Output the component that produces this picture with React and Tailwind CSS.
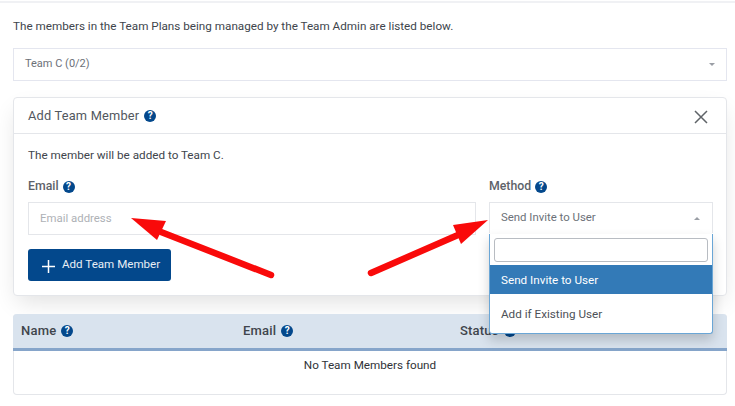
const font = { fontFamily: 'Roboto, sans-serif' };

function Help({ className = "" }) {
  return (
    <span className={`inline-flex w-[12px] h-[12px] rounded-full bg-[#03488c] text-white items-center justify-center text-[10px] font-bold leading-none ${className}`}>?</span>
  );
}

export default function App() {
  return (
    <div className="relative w-[735px] h-[406px] overflow-hidden bg-white text-[11.7px] text-[#3f444b]" style={font}>
      <div className="h-[3px] border-b-2 border-[#f0f1f4]" />
      <div className="pl-[13px] pr-[8px]">
        <p className="mt-[15px] h-[17px] leading-[17px] text-[#40454c]">The members in the Team Plans being managed by the Team Admin are listed below.</p>
        <div className="mt-[13px] h-[33px] border border-[#e4e6ef] flex items-center justify-between pl-[11px] pr-[11px] text-[#6c7178] text-[11px]">
          <span>Team C (0/2)</span>
          <span className="w-0 h-0 border-x-[3px] border-x-transparent border-t-[3px] border-t-[#9a9ea5]" />
        </div>
        <div className="mt-[16px] h-[199px] border border-[#e4e6ea] rounded-[4px] shadow-[0_10px_22px_-4px_rgba(0,0,0,0.12)] bg-white">
          <div className="h-[36px] border-b border-[#e4e6ea] flex items-center justify-between pl-[14px] pr-[18px]">
            <div className="flex items-center gap-[5px] text-[12.8px] text-[#52575e] tracking-[0.2px]">
              Add Team Member <Help />
            </div>
            <svg width="14" height="14" viewBox="0 0 14 14" className="mt-[2px]"><path d="M1 1 L13 13 M13 1 L1 13" stroke="#5f6368" strokeWidth="1.5" /></svg>
          </div>
          <div className="pl-[14px] pr-[13px]">
            <p className="mt-[13px] h-[17px] leading-[17px] text-[#40454c]">The member will be added to Team C.</p>
            <div className="mt-[14px] flex gap-[13px]">
              <div className="w-[448px] shrink-0">
                <div className="h-[17px] flex items-center gap-[4px] font-medium text-[12.3px] text-[#5d6269]">Email <Help /></div>
                <div className="mt-[7px] h-[33px] border border-[#e4e6ea] flex items-center pl-[11px] text-[#aeb1b6] text-[11.4px]">Email address</div>
              </div>
              <div className="w-[224px] shrink-0">
                <div className="h-[17px] flex items-center gap-[4px] font-medium text-[12.3px] text-[#5d6269]">Method <Help /></div>
                <div className="mt-[7px] h-[31px] border-x border-t border-[#e4e6ea] flex items-center justify-between pl-[11px] pr-[12px] text-[#6c7178] text-[11.4px]">
                  <span>Send Invite to User</span>
                  <span className="w-0 h-0 border-x-[3px] border-x-transparent border-b-[3px] border-b-[#9a9ea5]" />
                </div>
              </div>
            </div>
            <button className="mt-[14px] w-[143px] h-[32px] rounded-[3px] bg-[#03488c] text-white flex items-center pl-[14px] gap-[7px]">
              <svg width="13" height="13" viewBox="0 0 13 13" className="mt-[2px]"><path d="M6.5 0 V13 M0 6.5 H13" stroke="#fff" strokeWidth="1.5" /></svg>
              <span className="text-[#e8eef5] text-[11.6px]">Add Team Member</span>
            </button>
          </div>
        </div>
        <div className="mt-[18px] h-[81px] border-x border-b border-[#e4e6ea] rounded-[4px]">
          <div className="-mx-px h-[37px] bg-[#d9e3ee] border-b-[3px] border-[#86a5ca] rounded-t-[4px] flex items-center font-medium text-[13px] text-[#40454c] tracking-[0.2px]">
            <div className="w-[230px] pl-[8px] flex items-center gap-[5px]">Name <Help /></div>
            <div className="w-[217px] flex items-center gap-[5px]">Email <Help /></div>
            <div className="flex items-center gap-[5px]">Status <Help /></div>
          </div>
          <div className="text-center mt-[6px] h-[17px] leading-[17px] text-[#303338]">No Team Members found</div>
        </div>
      </div>

      <div className="absolute left-[489px] top-[234px] w-[224px] h-[100px] bg-white border-x border-b border-[#6aa6d6] rounded-b-[3px] shadow-[0_6px_12px_rgba(0,0,0,0.18)] text-[11.7px]">
        <div className="h-[31px] pt-[4px] px-[4px]">
          <div className="h-[24px] border border-[#b8bcc2] rounded-[3px]" />
        </div>
        <div className="h-[29px] pt-[2px] bg-[#337ab7] text-white flex items-center pl-[11px]">Send Invite to User</div>
        <div className="h-[39px] pt-[2px] flex items-center pl-[11px] text-[#4d5157]">Add if Existing User</div>
      </div>

      <svg className="absolute left-[125px] top-[210px]" width="160" height="75" viewBox="125 210 160 75">
        <path d="M161 232 L271 275" stroke="#f90a0a" strokeWidth="6.5" strokeLinecap="round" />
        <path d="M131 218 L166 221 L157 240 Z" fill="#f90a0a" />
      </svg>
      <svg className="absolute left-[365px] top-[215px]" width="130" height="65" viewBox="365 215 130 65">
        <path d="M458 235 L371 273" stroke="#f90a0a" strokeWidth="6.5" strokeLinecap="round" />
        <path d="M488 220 L453 225 L461 244 Z" fill="#f90a0a" />
      </svg>
    </div>
  );
}
